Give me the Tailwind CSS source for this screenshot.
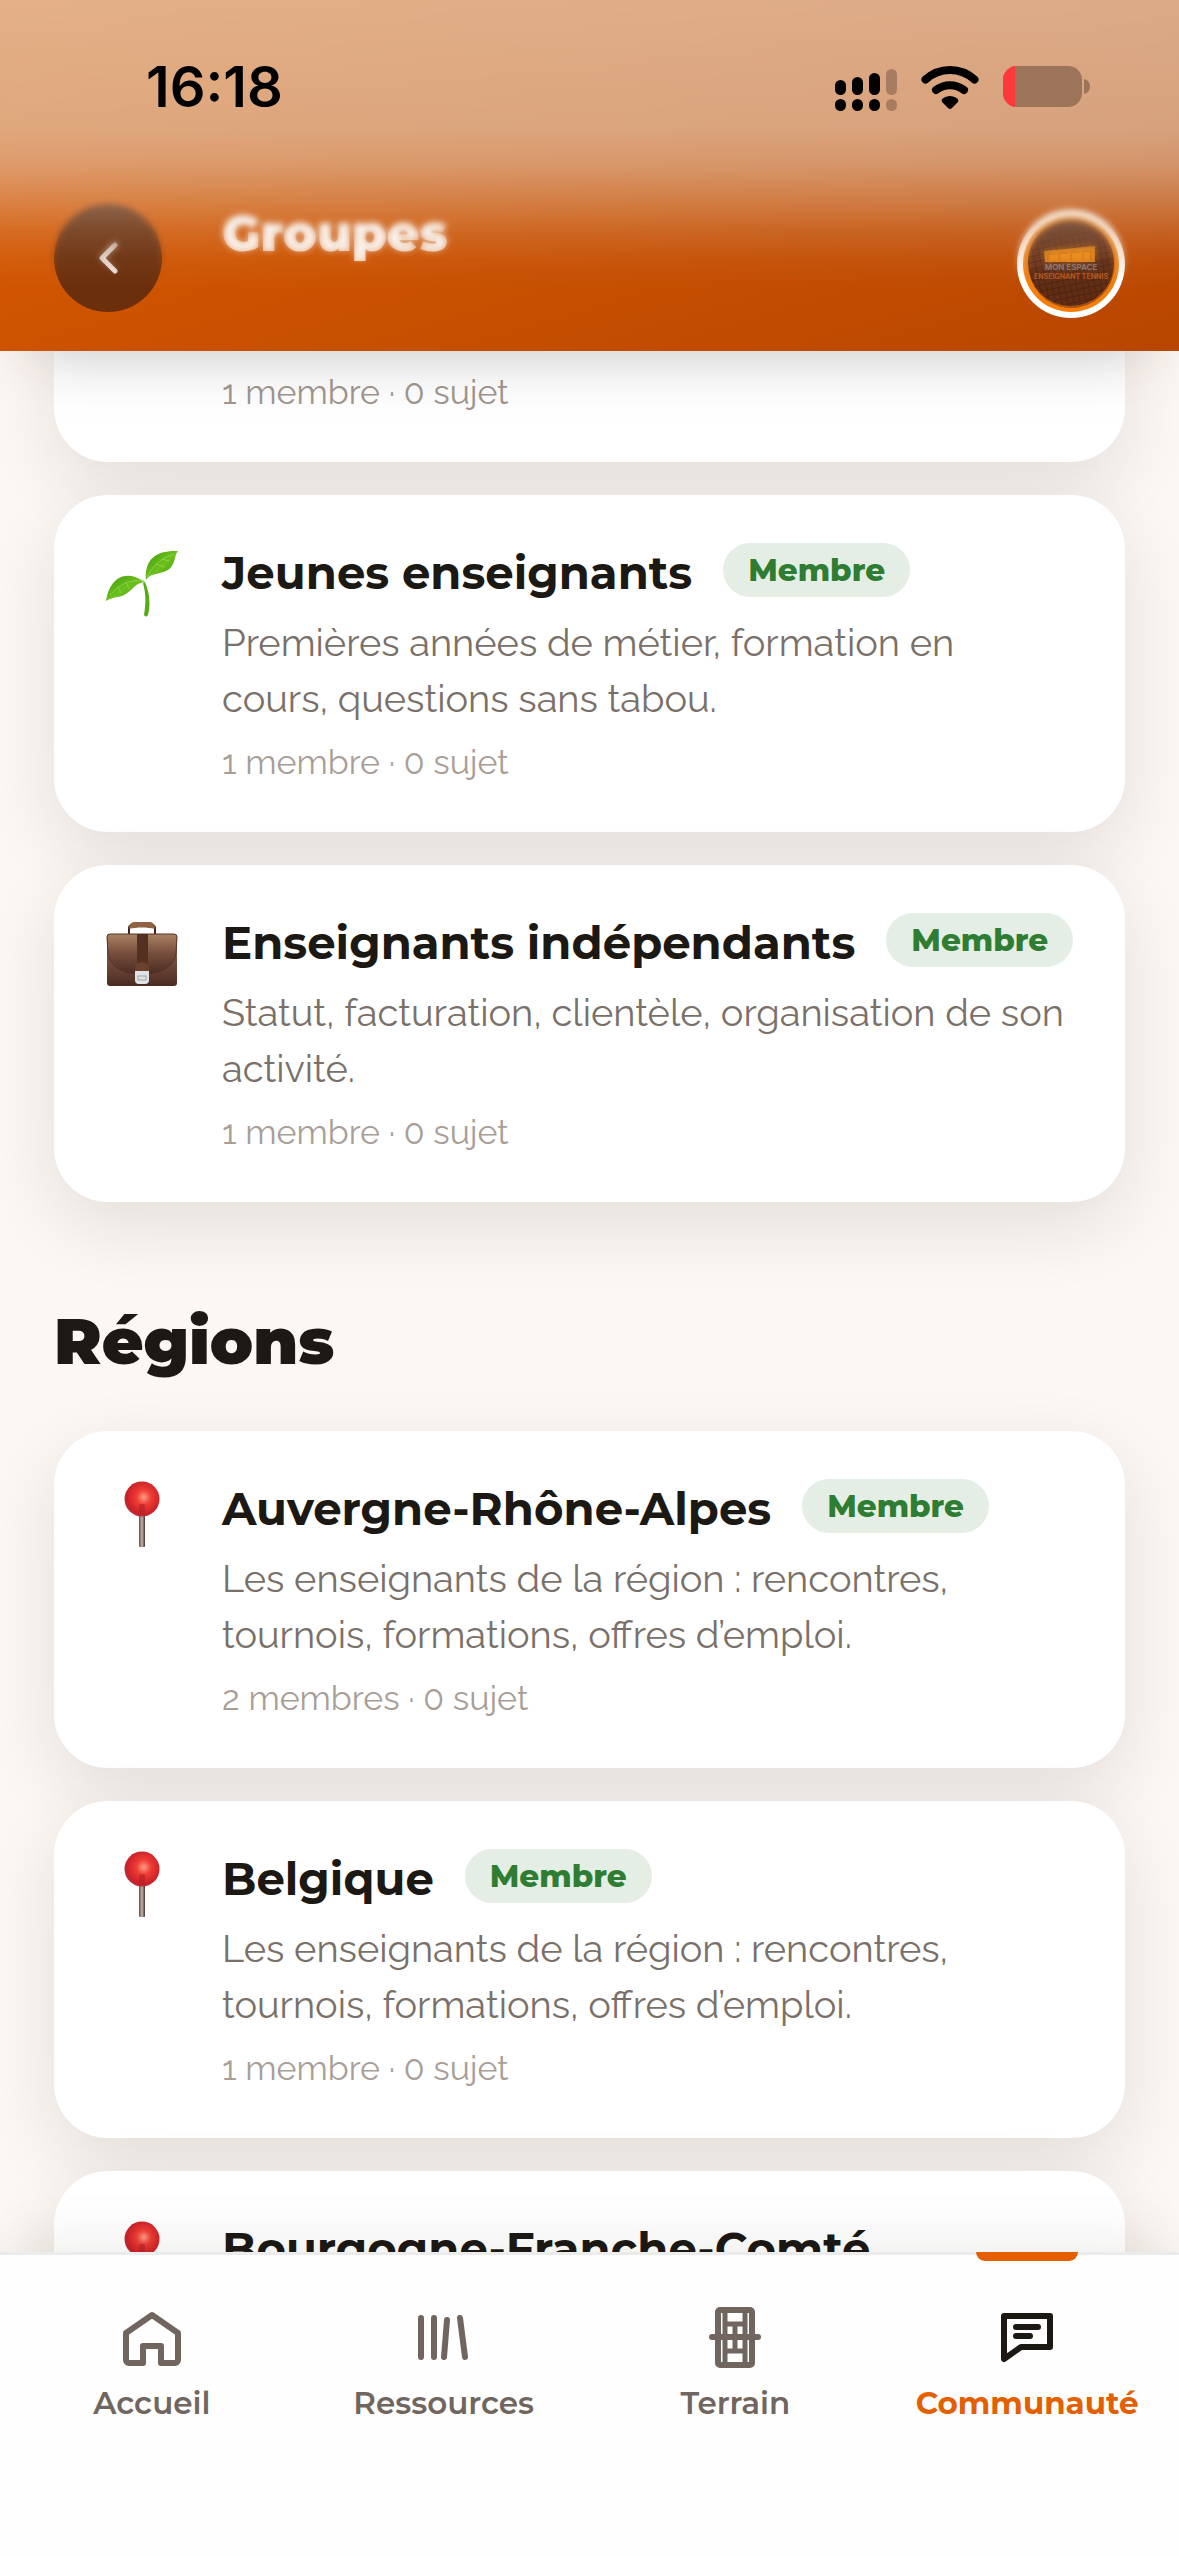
<!DOCTYPE html>
<html lang="fr">
<head>
  <meta charset="UTF-8">
  <meta name="viewport" content="width=device-width, initial-scale=1.0">
  <title>Groupes</title>
  <script src="https://cdn.jsdelivr.net/npm/@tailwindcss/browser@4"></script>
</head>
<body class="bg-[#fdf7f3] h-screen flex flex-col overflow-hidden font-['Raleway','Lato',sans-serif] text-[#1c1814]">

  <!-- Emoji sprites -->
  <svg class="absolute size-0" aria-hidden="true">
    <defs>
      <linearGradient id="leaf" x1="0" y1="0" x2="1" y2="1">
        <stop offset="0" stop-color="#3f9a0c"/>
        <stop offset="0.5" stop-color="#6cc01c"/>
        <stop offset="1" stop-color="#3d9a10"/>
      </linearGradient>
      <linearGradient id="leather" x1="0" y1="0" x2="0" y2="1">
        <stop offset="0" stop-color="#a98262"/>
        <stop offset="0.45" stop-color="#7a5140"/>
        <stop offset="1" stop-color="#4b2c22"/>
      </linearGradient>
      <radialGradient id="ball" cx="0.55" cy="0.45" r="0.6">
        <stop offset="0" stop-color="#ff9a80"/>
        <stop offset="0.35" stop-color="#ee3d35"/>
        <stop offset="0.8" stop-color="#cc2027"/>
        <stop offset="1" stop-color="#b03048"/>
      </radialGradient>
      <linearGradient id="needle" x1="0" y1="0" x2="1" y2="0">
        <stop offset="0" stop-color="#55504e"/>
        <stop offset="0.5" stop-color="#cbb5a8"/>
        <stop offset="1" stop-color="#3f2f2f"/>
      </linearGradient>
      <symbol id="pin" viewBox="0 0 72 72">
        <rect x="33" y="33" width="6" height="33" rx="1" fill="url(#needle)"/>
        <circle cx="36" cy="18" r="17.5" fill="url(#ball)"/>
        <rect x="33" y="23" width="6" height="11" rx="2" fill="#b3202c" opacity="0.6"/>
      </symbol>
    </defs>
  </svg>

  <!-- Header -->
  <header class="relative z-10 shrink-0 bg-linear-to-br from-[#e26003] to-[#b84600] shadow-[0_30px_60px_-30px_rgba(28,25,23,0.28)]">
    <div class="h-[174px]"></div>
    <div class="flex items-start px-[54px] pt-[30px] pb-[33px]">
      <button type="button" aria-label="Retour" class="size-[108px] rounded-full bg-[#6c2f0b] flex items-center justify-center">
        <svg class="size-[48px]" viewBox="0 0 48 48" fill="none" stroke="#f6ece6" stroke-width="5" stroke-linecap="round" stroke-linejoin="round"><path d="M31 11 18 24l13 13"/></svg>
      </button>
      <h1 class="ml-[60px] flex-1 font-['Montserrat','Inter',sans-serif] font-black text-[50px] leading-[60px] text-[#fdf3ec]">Groupes</h1>
      <a href="#" aria-label="Mon profil" class="mt-[6px] block">
        <svg class="size-[108px]" viewBox="0 0 108 108">
          <defs>
            <pattern id="net" width="6" height="6" patternUnits="userSpaceOnUse" patternTransform="rotate(-12)">
              <rect width="6" height="6" fill="#713719"/>
              <path d="M0 0H6M0 0V6" stroke="#512512" stroke-width="2"/>
            </pattern>
          </defs>
          <circle cx="54" cy="54" r="54" fill="#fff"/>
          <circle cx="54" cy="54" r="48" fill="#f57d0a"/>
          <circle cx="54" cy="53" r="43" fill="url(#net)"/>
          <path d="M12 60 97 48A43 43 0 0 1 12 62Z" fill="#4e210f" opacity="0.45"/>
          <path d="m27 41 51-5v16H28Z" fill="#f08a12"/>
          <path d="M31 50v-6h8m3 6v-7h9m3 7v-8h9m3 8v-9h8v9" fill="none" stroke="#b9600c" stroke-width="1"/>
          <text x="54" y="60" text-anchor="middle" font-family="Inter, sans-serif" font-weight="700" font-size="8" fill="#8f8079">MON ESPACE</text>
          <text x="54" y="69" text-anchor="middle" font-family="Inter, sans-serif" font-weight="700" font-size="7" fill="#b9561c">ENSEIGNANT TENNIS</text>
        </svg>
      </a>
    </div>

    <!-- Frosted haze behind the status bar -->
    <div class="pointer-events-none absolute inset-x-0 top-0 h-[280px] backdrop-blur-[3px] [mask-image:linear-gradient(to_bottom,#000_80%,transparent)]"></div>
    <div class="pointer-events-none absolute inset-x-0 top-0 h-[290px] bg-[linear-gradient(to_bottom,rgba(229,232,230,0.59)_0px,rgba(229,232,230,0.54)_130px,rgba(229,232,230,0.46)_165px,rgba(229,232,230,0.3)_200px,rgba(229,232,230,0.15)_232px,rgba(229,232,230,0.05)_260px,rgba(229,232,230,0)_290px)]"></div>

    <!-- Status bar -->
    <div class="absolute inset-x-0 top-0 h-[174px] flex items-center justify-between pl-[146px] pr-[89px] text-black">
      <span class="font-['Inter',sans-serif] font-semibold text-[56px] leading-none">16:18</span>
      <div class="flex items-center gap-6">
        <svg class="w-[62px] h-[50px]" viewBox="0 0 62 50">
          <rect x="0" y="18" width="11" height="15" rx="5.5"/>
          <rect x="17" y="15" width="11" height="18" rx="5.5"/>
          <rect x="34" y="11" width="11" height="22" rx="5.5"/>
          <rect x="51" y="7" width="11" height="26" rx="5.5" fill="#a87c60"/>
          <rect x="0" y="37" width="11" height="12" rx="5.5"/>
          <rect x="17" y="37" width="11" height="12" rx="5.5"/>
          <rect x="34" y="37" width="11" height="12" rx="5.5"/>
          <rect x="51" y="37" width="11" height="12" rx="5.5" fill="#a87c60"/>
        </svg>
        <svg class="w-[58px] h-[50px]" viewBox="0 0 58 50" fill="none" stroke="#000" stroke-width="8" stroke-linecap="round">
          <path d="M4.500 17.500A36 36 0 0 1 53.500 17.500"/>
          <path d="M15 28A23 23 0 0 1 43 28"/>
          <path d="M29 47c-1 0-1.500-.500-2.200-1.200l-5.300-5.300c-1.200-1.300-1.200-2.800.200-3.900 4.300-3.400 10.300-3.400 14.600 0 1.400 1.100 1.400 2.600.200 3.900l-5.300 5.300C30.500 46.500 30 47 29 47Z" fill="#000" stroke="none"/>
        </svg>
        <svg class="w-[87px] h-[50px]" viewBox="0 0 87 50">
          <rect x="0" y="4" width="79" height="41" rx="14" fill="#9b745a"/>
          <path d="M12 4v41A14 14 0 0 1 0 31V18A14 14 0 0 1 12 4Z" fill="#ff383c"/>
          <path d="M81 17c4 1 6 4 6 7.500s-2 6.500-6 7.500Z" fill="#9b745a"/>
        </svg>
      </div>
    </div>
  </header>

  <!-- Group list -->
  <main class="flex-1 min-h-0 overflow-hidden px-[54px]">
    <section class="flex flex-col gap-[33px]">
      <article class="bg-white rounded-b-[54px] shadow-[0_24px_72px_rgba(28,25,23,0.11)] pl-[168px] pr-[50px] pt-4 pb-[45px]">
        <p class="text-[34px] leading-[50px] text-[#a1968e]">1 membre · 0 sujet</p>
      </article>

      <article class="bg-white rounded-[54px] shadow-[0_24px_72px_rgba(28,25,23,0.11)] flex gap-11 pl-[52px] pr-[50px] pt-12 pb-[45px]">
        <svg class="size-[72px] mt-[2px] shrink-0" viewBox="0 0 72 72">
          <path d="M39 37c4 10 6 20 3 33q-2 3-4 0c2-13 2-21-1-32Z" fill="#55ab12"/>
          <path d="M39 37c-9 0-13 9-21 13-6 3-10 1-18 6C3 36 17 22 39 37Z" fill="url(#leaf)"/>
          <path d="M40 35C38 13 52 5 72 6c-4 4-2 13-10 19-8 5-17 2-22 10Z" fill="url(#leaf)"/>
          <path d="M4 50Q18 33 38 36M41 32Q50 14 68 9M12 42l3 6M20 37l3 7M50 19l9 3M56 14l7 2" fill="none" stroke="#a5dd68" stroke-width="1" opacity="0.6"/>
        </svg>
        <div class="flex-1">
          <div class="flex items-start gap-[31px]">
            <h3 class="font-['Montserrat','Inter',sans-serif] font-bold text-[45px] leading-[60px] whitespace-nowrap">Jeunes enseignants</h3>
            <span class="rounded-full bg-[#e4eee4] text-[#2e7d32] font-['Montserrat','Inter',sans-serif] font-extrabold text-[31px] leading-[54px] px-[25px]">Membre</span>
          </div>
          <p class="mt-3 pr-2 text-[38px] leading-[56px] text-[#7a706a]">Premières années de métier, formation en cours, questions sans tabou.</p>
          <p class="mt-[10px] text-[34px] leading-[50px] text-[#a89e97]">1 membre · 0 sujet</p>
        </div>
      </article>

      <article class="bg-white rounded-[54px] shadow-[0_24px_72px_rgba(28,25,23,0.11)] flex gap-11 pl-[52px] pr-[50px] pt-12 pb-[45px]">
        <svg class="size-[72px] mt-[2px] shrink-0" viewBox="0 0 72 72">
          <path d="M23 20v-7q0-3 4-3h18q4 0 4 3v7" fill="none" stroke="#3c231a" stroke-width="2"/>
          <path d="M23 14c0-5 2-7 6-7h14c4 0 6 2 6 7-8-2-18-2-26 0Z" fill="#8f6244"/>
          <rect x="1" y="19" width="70" height="52" rx="3" fill="url(#leather)"/>
          <path d="M2 38C4 52 16 59 36 59S68 52 70 38l1-16q0-3-3-3H4q-3 0-3 3Z" fill="url(#leather)" stroke="#553427" stroke-width="1"/>
          <rect x="31" y="19" width="11" height="34" fill="#543021"/>
          <path d="M29 56v-3q0-6 7-6t7 6v3Z" fill="#6a4030"/>
          <path d="M29 56h14v9q0 4-4 4h-6q-4 0-4-4Z" fill="#dfe3e6"/>
          <rect x="32" y="61" width="8" height="4" fill="none" stroke="#9fa5a8" stroke-width="1"/>
        </svg>
        <div class="flex-1">
          <div class="flex items-start gap-[31px]">
            <h3 class="font-['Montserrat','Inter',sans-serif] font-bold text-[45px] leading-[60px] whitespace-nowrap">Enseignants indépendants</h3>
            <span class="rounded-full bg-[#e4eee4] text-[#2e7d32] font-['Montserrat','Inter',sans-serif] font-extrabold text-[31px] leading-[54px] px-[25px]">Membre</span>
          </div>
          <p class="mt-3 pr-2 text-[38px] leading-[56px] text-[#7a706a]">Statut, facturation, clientèle, organisation de son activité.</p>
          <p class="mt-[10px] text-[34px] leading-[50px] text-[#a89e97]">1 membre · 0 sujet</p>
        </div>
      </article>
    </section>

    <h2 class="mt-[99px] mb-[50px] font-['Montserrat','Inter',sans-serif] font-black text-[64px] leading-[80px]">Régions</h2>

    <section class="flex flex-col gap-[33px]">
      <article class="bg-white rounded-[54px] shadow-[0_24px_72px_rgba(28,25,23,0.11)] flex gap-11 pl-[52px] pr-[50px] pt-12 pb-[45px]">
        <svg class="size-[72px] mt-[2px] shrink-0"><use href="#pin"/></svg>
        <div class="flex-1">
          <div class="flex items-start gap-[31px]">
            <h3 class="font-['Montserrat','Inter',sans-serif] font-bold text-[45px] leading-[60px] whitespace-nowrap">Auvergne-Rhône-Alpes</h3>
            <span class="rounded-full bg-[#e4eee4] text-[#2e7d32] font-['Montserrat','Inter',sans-serif] font-extrabold text-[31px] leading-[54px] px-[25px]">Membre</span>
          </div>
          <p class="mt-3 pr-2 text-[38px] leading-[56px] text-[#7a706a]">Les enseignants de la région : rencontres, tournois, formations, offres d’emploi.</p>
          <p class="mt-[10px] text-[34px] leading-[50px] text-[#a89e97]">2 membres · 0 sujet</p>
        </div>
      </article>

      <article class="bg-white rounded-[54px] shadow-[0_24px_72px_rgba(28,25,23,0.11)] flex gap-11 pl-[52px] pr-[50px] pt-12 pb-[45px]">
        <svg class="size-[72px] mt-[2px] shrink-0"><use href="#pin"/></svg>
        <div class="flex-1">
          <div class="flex items-start gap-[31px]">
            <h3 class="font-['Montserrat','Inter',sans-serif] font-bold text-[45px] leading-[60px] whitespace-nowrap">Belgique</h3>
            <span class="rounded-full bg-[#e4eee4] text-[#2e7d32] font-['Montserrat','Inter',sans-serif] font-extrabold text-[31px] leading-[54px] px-[25px]">Membre</span>
          </div>
          <p class="mt-3 pr-2 text-[38px] leading-[56px] text-[#7a706a]">Les enseignants de la région : rencontres, tournois, formations, offres d’emploi.</p>
          <p class="mt-[10px] text-[34px] leading-[50px] text-[#a89e97]">1 membre · 0 sujet</p>
        </div>
      </article>

      <article class="bg-white rounded-[54px] shadow-[0_24px_72px_rgba(28,25,23,0.11)] flex gap-11 pl-[52px] pr-[50px] pt-12 pb-[45px]">
        <svg class="size-[72px] mt-[2px] shrink-0"><use href="#pin"/></svg>
        <h3 class="font-['Montserrat','Inter',sans-serif] font-bold text-[45px] leading-[60px] whitespace-nowrap">Bourgogne-Franche-Comté</h3>
      </article>
    </section>
  </main>

  <!-- Tab bar -->
  <nav class="relative z-10 shrink-0 bg-[#fefefe] border-t-3 border-[#ebebeb] shadow-[0_-12px_60px_-12px_rgba(28,25,23,0.1)] grid grid-cols-4 px-[6px] pb-[133px] font-['Montserrat','Inter',sans-serif] font-semibold text-[31px] leading-[40px] text-[#70665f]">
    <a href="#" class="flex flex-col items-center gap-2 pt-12">
      <svg class="size-[72px]" viewBox="0 0 72 72" fill="none" stroke="currentColor" stroke-width="6" stroke-linecap="round" stroke-linejoin="round">
        <path d="M10 30 36 12l26 18v27a3 3 0 0 1-3 3H45V43H27v17H13a3 3 0 0 1-3-3Z"/>
      </svg>
      Accueil
    </a>
    <a href="#" class="flex flex-col items-center gap-2 pt-12">
      <svg class="size-[72px]" viewBox="0 0 72 72" fill="none" stroke="currentColor" stroke-width="6" stroke-linecap="round">
        <path d="M13 15v39M26 15v39M39 17l-3 37M52 15l5 39"/>
      </svg>
      Ressources
    </a>
    <a href="#" class="flex flex-col items-center gap-2 pt-12">
      <svg class="size-[72px]" viewBox="0 0 72 72" fill="none" stroke="currentColor" stroke-width="5" stroke-linecap="round">
        <rect x="19" y="7" width="34" height="55" rx="2" stroke-width="6"/>
        <path d="M26 7v55M46 7v55M26 21h20M26 48h20M36 21v27"/>
        <path d="M13 34h46" stroke-width="6"/>
      </svg>
      Terrain
    </a>
    <a href="#" aria-current="page" class="relative flex flex-col items-center gap-2 pt-12 font-bold text-[#e35f00]">
      <span class="absolute -top-[3px] left-1/2 -translate-x-1/2 w-[102px] h-[9px] rounded-b-[9px] bg-[#e35f00]"></span>
      <svg class="size-[72px] text-[#1c1814]" viewBox="0 0 72 72" fill="none" stroke="currentColor" stroke-width="6" stroke-linecap="round" stroke-linejoin="round">
        <path d="M13 13h46v31H30L13 56Z"/>
        <path d="M25 24h22M25 33h14"/>
      </svg>
      Communauté
    </a>
  </nav>
</body>
</html>
